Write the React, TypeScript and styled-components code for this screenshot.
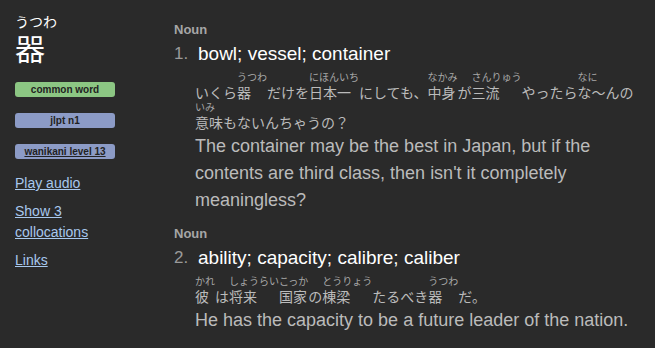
import React from 'react';
import styled, { createGlobalStyle } from 'styled-components';

const GlobalStyle = createGlobalStyle`
  html, body {
    margin: 0;
    padding: 0;
    background: #2a2a2a;
  }
  body {
    font-family: "Liberation Sans", "Noto Sans CJK JP", Arial, sans-serif;
    color: #bbbbbb;
  }
`;

const Page = styled.div`
  display: flex;
  align-items: flex-start;
  min-height: 348px;
  padding-left: 15px;
  box-sizing: border-box;
`;

const Sidebar = styled.aside`
  width: 100px;
  flex-shrink: 0;
  padding-top: 12px;
  margin-right: 59px;
`;

const Reading = styled.div`
  font-family: "Noto Sans CJK JP", sans-serif;
  font-size: 14px;
  line-height: 18px;
  color: #ffffff;
`;

const Headword = styled.div`
  font-family: "Noto Sans CJK JP", sans-serif;
  font-size: 30px;
  line-height: 34px;
  color: #ffffff;
  margin-bottom: 18px;
`;

const Tag = styled.div<{ $bg: string }>`
  height: 15px;
  line-height: 15px;
  border-radius: 3px;
  background: ${(p) => p.$bg};
  color: #222222;
  font-size: 10px;
  font-weight: bold;
  text-align: center;
  margin-bottom: 16px;

  a {
    color: #222222;
    text-decoration: underline;
  }
`;

const Links = styled.div`
  margin-top: -2px;
`;

const SideLink = styled.a`
  display: block;
  font-size: 14px;
  line-height: 21px;
  color: #a8c8ee;
  text-decoration: underline;
  margin-bottom: 7px;
`;

const Main = styled.main`
  flex: 1;
  padding-top: 22px;
  padding-right: 10px;
`;

const Section = styled.section`
  margin-bottom: 12px;
`;

const PartOfSpeech = styled.div`
  font-size: 13px;
  line-height: 16px;
  font-weight: bold;
  color: #a6a6a6;
  margin-bottom: 4px;
`;

const Sense = styled.div`
  display: flex;
`;

const Num = styled.span`
  width: 23px;
  flex-shrink: 0;
  font-size: 17px;
  line-height: 24px;
  color: #9a9a9a;
`;

const Body = styled.div`
  flex: 1;
  margin-left: -2px;
`;

const Meaning = styled.div`
  font-size: 19px;
  line-height: 24px;
  color: #ffffff;
  margin-left: 3px;
  margin-bottom: 5px;
`;

const Sentence = styled.div`
  display: flex;
  flex-wrap: wrap;
  font-family: "Noto Sans CJK JP", sans-serif;
`;

const Word = styled.span`
  display: flex;
  flex-direction: column;
  align-items: flex-start;
`;

const Furi = styled.span`
  font-size: 10px;
  line-height: 12px;
  height: 12px;
  color: #a8a8a8;
  white-space: nowrap;
`;

const Base = styled.span`
  font-size: 14px;
  line-height: 18px;
  color: #bbbbbb;
  white-space: nowrap;
`;

const English = styled.div`
  font-size: 18px;
  line-height: 27px;
  color: #bbbbbb;
  margin-top: 2px;
`;

type Token = [string, string?];

const senses: { pos: string; meaning: string; jp: Token[]; en: string }[] = [
  {
    pos: 'Noun',
    meaning: 'bowl; vessel; container',
    jp: [
      ['いくら'],
      ['器', 'うつわ'],
      ['だけを'],
      ['日本一', 'にほんいち'],
      ['にしても、'],
      ['中身', 'なかみ'],
      ['が'],
      ['三流', 'さんりゅう'],
      ['やったら'],
      ['な～ん', 'なに'],
      ['の'],
      ['意味', 'いみ'],
      ['もないんちゃうの？'],
    ],
    en: "The container may be the best in Japan, but if the contents are third class, then isn't it completely meaningless?",
  },
  {
    pos: 'Noun',
    meaning: 'ability; capacity; calibre; caliber',
    jp: [
      ['彼', 'かれ'],
      ['は'],
      ['将来', 'しょうらい'],
      ['国家', 'こっか'],
      ['の'],
      ['棟梁', 'とうりょう'],
      ['たるべき'],
      ['器', 'うつわ'],
      ['だ。'],
    ],
    en: 'He has the capacity to be a future leader of the nation.',
  },
];

const App: React.FC = () => {
  return (
    <>
      <GlobalStyle />
      <Page>
        <Sidebar>
          <Reading>うつわ</Reading>
          <Headword>器</Headword>
          <Tag $bg="#8cc683">common word</Tag>
          <Tag $bg="#8c9bc6">jlpt n1</Tag>
          <Tag $bg="#8c9bc6">
            <a href="#">wanikani level 13</a>
          </Tag>
          <Links>
            <SideLink href="#">Play audio</SideLink>
            <SideLink href="#">Show 3 collocations</SideLink>
            <SideLink href="#">Links</SideLink>
          </Links>
        </Sidebar>

        <Main>
          {senses.map((s, i) => (
            <Section key={i}>
              <PartOfSpeech>{s.pos}</PartOfSpeech>
              <Sense>
                <Num>{i + 1}.</Num>
                <Body>
                  <Meaning>{s.meaning}</Meaning>
                  <Sentence>
                    {s.jp.map(([base, furi], j) => (
                      <Word key={j}>
                        <Furi>{furi ?? ''}</Furi>
                        <Base>{base}</Base>
                      </Word>
                    ))}
                  </Sentence>
                  <English>{s.en}</English>
                </Body>
              </Sense>
            </Section>
          ))}
        </Main>
      </Page>
    </>
  );
};

export default App;
